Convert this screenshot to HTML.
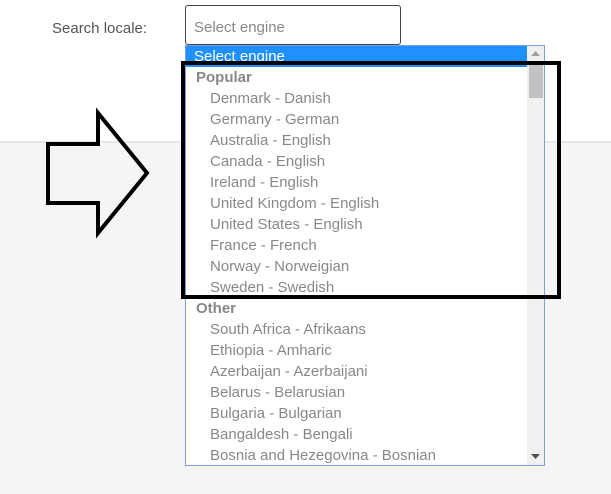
<!DOCTYPE html>
<html><head><style>
body{margin:0;width:611px;height:494px;overflow:hidden;background:#f5f5f5;font-family:"Liberation Sans",sans-serif;position:relative}
.top{position:absolute;left:0;top:0;width:611px;height:141px;background:#fff;border-bottom:2px solid #e8e8e8}
.lbl{position:absolute;left:52px;top:20px;font-size:15px;color:#555}
.inp{position:absolute;left:185px;top:5px;border:1px solid #444;border-radius:3px;background:#fff;box-sizing:border-box;width:216px;height:40px;font-size:15px;color:#888;padding:13px 8px 0}
.dd{position:absolute;left:185px;top:45px;width:360px;height:421px;border:1px solid #7a9ee0;box-sizing:border-box;background:#fff;overflow:hidden;padding-top:2px}
.row{height:21px;line-height:21px;font-size:15px;color:#888;padding-left:24px;white-space:nowrap}
.grp{padding-left:10px;font-weight:bold}
.sel{background:#1e90ff;color:#fff;padding-left:8px;margin-right:17px;margin-top:-3px;height:22px;line-height:23px}
.sb{position:absolute;right:0;top:0;width:17px;height:100%;background:#f0f0f0}
.th{position:absolute;right:1px;top:18px;width:14px;height:34px;background:#c1c1c1}
</style></head><body>
<div class="top"></div>
<div class="lbl">Search locale:</div>
<div class="inp">Select engine</div>
<div class="dd">
<div class="sb"><div class="th"></div>
<svg style="position:absolute;left:4px;top:5px" width="9" height="6"><path d="M0 5L4.5 0L9 5Z" fill="#a0a0a0"/></svg>
<svg style="position:absolute;left:4px;bottom:5px" width="9" height="6"><path d="M0 0L4.5 5L9 0Z" fill="#505050"/></svg></div>
<div class="row sel">Select engine</div>
<div class="row grp">Popular</div>
<div class="row">Denmark - Danish</div>
<div class="row">Germany - German</div>
<div class="row">Australia - English</div>
<div class="row">Canada - English</div>
<div class="row">Ireland - English</div>
<div class="row">United Kingdom - English</div>
<div class="row">United States - English</div>
<div class="row">France - French</div>
<div class="row">Norway - Norweigian</div>
<div class="row">Sweden - Swedish</div>
<div class="row grp">Other</div>
<div class="row">South Africa - Afrikaans</div>
<div class="row">Ethiopia - Amharic</div>
<div class="row">Azerbaijan - Azerbaijani</div>
<div class="row">Belarus - Belarusian</div>
<div class="row">Bulgaria - Bulgarian</div>
<div class="row">Bangaldesh - Bengali</div>
<div class="row">Bosnia and Hezegovina - Bosnian</div>
</div>
<svg style="position:absolute;left:0;top:0" width="611" height="494">
<rect x="183" y="63" width="376" height="234" fill="none" stroke="#000" stroke-width="4"/>
<path d="M48 144H98V113L147 173L98 233V203H48Z" fill="none" stroke="#000" stroke-width="4" stroke-linejoin="miter"/>
</svg>
</body></html>
